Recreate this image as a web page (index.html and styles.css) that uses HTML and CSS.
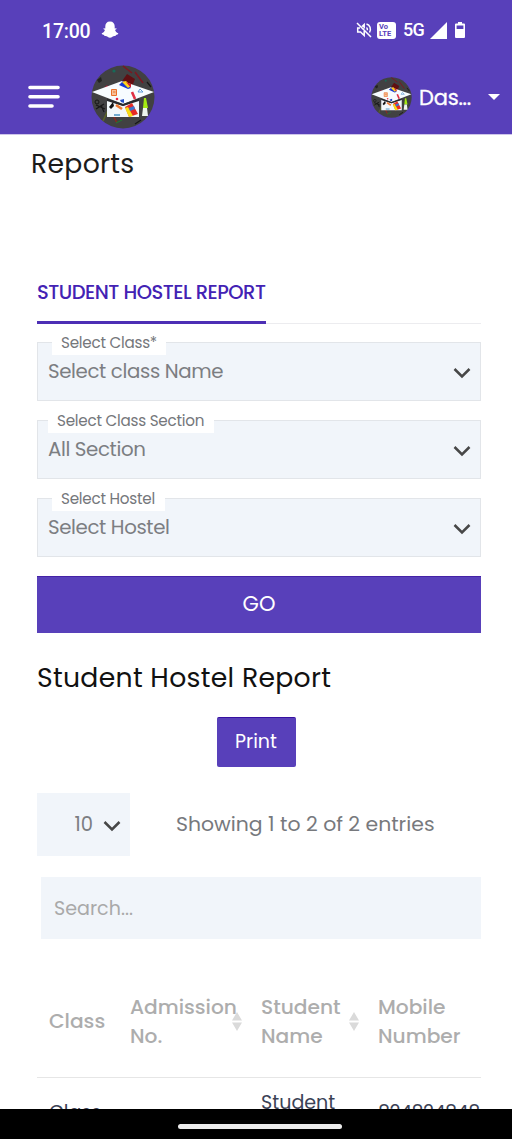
FILE: index.html
```html
<!DOCTYPE html>
<html lang="en">
<head>
<meta charset="utf-8">
<meta name="viewport" content="width=device-width">
<title>Reports</title>
<link rel="stylesheet" href="styles.css">
</head>
<body>
<svg class="defs" width="0" height="0" aria-hidden="true">
  <symbol id="crest" viewBox="0 0 64 64">
    <circle cx="32" cy="32" r="31.5" fill="#414142"/>
    <path d="M36 9l8 5-4 10-11-5z" fill="#5f0f12"/>
    <path d="M32 1l9 7M44 7l8 11" stroke="#7d1621" stroke-width="1.5"/>
    <circle cx="23" cy="6" r="1.6" fill="#176a58"/>
    <path d="M6 15l4-3 1 4-3 2z" fill="#222"/>
    <path d="M12 24l4-4 2 3-4 3z" fill="#a31731"/>
    <path d="M5 40l9 4M5 44l8-5M10 40l3 7M56 17l4 5M50 55l-6 4" stroke="#171717" stroke-width="1.3" fill="none"/>
    <circle cx="6" cy="37" r="2" fill="none" stroke="#171717"/>
    <path d="M18 43l-6 13" stroke="#5b6427" stroke-width="1.6"/>
    <path d="M22 50l4 8" stroke="#8b2a20" stroke-width="1.6"/>
    <path d="M25 58l6-3" stroke="#247431" stroke-width="1.2"/>
    <path d="M16 35l16 6 16-6v17H16z" fill="#f2f8fa"/>
    <path d="M1 27l30-11 32 11-31 12z" fill="#f7fcff"/>
    <path d="M16 33.500l16 5.500 16-5.500v2.500l-16 5-16-5z" fill="#28292d"/>
    <path d="M28 20l4-4 8 7-3 1z" fill="#1739d5"/>
    <path d="M31 17l4-1 5 5-3 2z" fill="#ffd51c"/>
    <path d="M35 17l5 2v4z" fill="#d4202b"/>
    <path d="M20.500 24.500h5v6h-5zM22 27h2.500" fill="#f7c19a" stroke="#ea712a"/>
    <path d="M41 27l3 7" stroke="#df3045" stroke-width="2.600"/>
    <path d="M47 27l2-3 3 3z" fill="none" stroke="#5c9ad6"/>
    <path d="M29 35l4-1v4l-3-1z" fill="#254fc4"/>
    <circle cx="26" cy="34" r="1.3" fill="#e92a42"/>
    <path d="M34 42l7-4 6 11-9 3z" fill="#e62c26"/>
    <path d="M34 43l3-1 5 9-4 1z" fill="#f7dd15"/>
    <path d="M38 43l5-2 1 3-5 2z" fill="#3c75cf"/>
    <path d="M25 40l6 4" stroke="#ee7931" stroke-width="2.6"/>
    <path d="M18 42l4-5 1 4-3 3z" fill="#121212"/>
    <path d="M23 50h6" stroke="#73acd0" stroke-width="2"/>
    <path d="M53 33h2l2 10h-5z" fill="#a4ea12"/>
    <path d="M52 43h4l1 8h-6z" fill="#eef5ed"/>
  </symbol>
  <symbol id="chevron" viewBox="0 0 18 12">
    <path d="M1.5 2L9 9.500L16.500 2" fill="none" stroke="#474747" stroke-width="2.500"/>
  </symbol>
  <symbol id="sort" viewBox="0 0 10 19">
    <path d="M5 0l5 8.500H0zM0 10.500h10L5 19z" fill="#dadada"/>
  </symbol>
</svg>

<div class="screen">
  <header class="top">
    <div class="status">
      <span class="clock">17:00</span>
      <svg class="ghost" viewBox="0 0 18 18"><path d="M9 .5c3.200 0 4.700 2.100 4.700 4.800v2.200l1.700-.3c.5.700-.4 1.300-1.300 1.700.3 1.600 1.500 2.800 3.200 3.400-.1 1.200-1.300 1.400-2.400 1.600l-.4 1.200c-1.300-.2-2.200-.1-3.100.7-1.500 1.200-3.300 1.200-4.800 0-.9-.8-1.800-.9-3.100-.7l-.4-1.200C2 13.700.8 13.500.7 12.300c1.700-.6 2.900-1.800 3.200-3.400-.9-.4-1.800-1-1.300-1.700l1.700.3V5.300C4.300 2.600 5.800.5 9 .5z" fill="#fff"/></svg>
      <div class="signals">
        <svg class="mute" viewBox="0 0 16 16" fill="none" stroke="#fff" stroke-width="1.500"><path d="M1 1l14 14M6 4.500L8.200 2.500v4M8.200 9v4.500L4.500 10H1.700V6H4M10.500 5.500c.8.700 1 1.500.9 2.700M10.500 2c3.500 1 5 5 3 8.500"/></svg>
        <span class="volte"><span>Vo</span><span>LTE</span></span>
        <span class="net">5G</span>
        <svg class="bars" viewBox="0 0 17 17"><path d="M17 0v17H0z" fill="#fff"/></svg>
        <svg class="battery" viewBox="0 0 10 16"><path d="M3 0h4v1.500h2q1 0 1 1V15q0 1-1 1H1q-1 0-1-1V2.500q0-1 1-1h2z" fill="#fff"/><path d="M1.600 3.500h6.800v3.500H1.600z" fill="#5840ba"/></svg>
      </div>
    </div>
    <nav class="bar">
      <svg class="menu" viewBox="0 0 32 24" stroke="#fff" stroke-width="3.600" stroke-linecap="round"><path d="M2 2.500h28M2 11.800h28M2 21h22"/></svg>
      <svg class="logo"><use href="#crest"/></svg>
      <div class="user">
        <svg class="avatar"><use href="#crest"/></svg>
        <span class="name">Das...</span>
        <svg class="caret" viewBox="0 0 12 6"><path d="M0 0h12L6 6z" fill="#fff"/></svg>
      </div>
    </nav>
  </header>

  <main class="page">
    <h1 class="title">Reports</h1>
    <div class="tabs"><span class="tab">STUDENT HOSTEL REPORT</span></div>
    <div class="form">
      <div class="field">
        <span class="label wide">Select Class*</span>
        <span class="value">Select class Name</span>
        <svg class="chev"><use href="#chevron"/></svg>
      </div>
      <div class="field">
        <span class="label section">Select Class Section</span>
        <span class="value">All Section</span>
        <svg class="chev"><use href="#chevron"/></svg>
      </div>
      <div class="field">
        <span class="label hostel">Select Hostel</span>
        <span class="value">Select Hostel</span>
        <svg class="chev"><use href="#chevron"/></svg>
      </div>
    </div>
    <button class="go">GO</button>
    <h2 class="subtitle">Student Hostel Report</h2>
    <button class="print">Print</button>
    <div class="paging">
      <div class="count"><span>10</span><svg class="chev"><use href="#chevron"/></svg></div>
      <span class="info">Showing 1 to 2 of 2 entries</span>
    </div>
    <div class="search">Search...</div>
    <div class="grid head">
      <div class="cell">Class</div>
      <div class="cell">Admission<br>No.<svg class="sort s-adm"><use href="#sort"/></svg></div>
      <div class="cell">Student<br>Name<svg class="sort s-name"><use href="#sort"/></svg></div>
      <div class="cell">Mobile<br>Number</div>
    </div>
    <div class="grid row">
      <div class="cell low">Class</div>
      <div class="cell"></div>
      <div class="cell">Student</div>
      <div class="cell low phone">824824848</div>
    </div>
  </main>
  <footer class="gesture"><span class="pill"></span></footer>
</div>
</body>
</html>
```
FILE: styles.css
```css
* { box-sizing: border-box; }
body { margin: 0; background: #fff; font-family: Poppins, Inter, "Open Sans", sans-serif; }
.defs { position: absolute; }
.screen { width: 512px; height: 1139px; overflow: hidden; display: flex; flex-direction: column; }

.top { flex: none; height: 135px; background: #5840ba; border-bottom: 1px solid #cdc5ea; color: #fff; }
.status { height: 60px; padding: 0 46px 0 42px; display: flex; align-items: center; font-family: Roboto, sans-serif; }
.clock { font-size: 19.5px; font-weight: 500; line-height: 20px; letter-spacing: -0.2px; width: 59px; padding-top: 3px; }
.ghost { width: 18px; height: 18px; }
.signals { margin-left: auto; display: flex; align-items: center; }
.mute { width: 16px; height: 16px; margin-right: 5px; }
.volte { width: 19px; height: 17px; border-radius: 3px; background: #fff; color: #5840ba; font-size: 7.5px; line-height: 7px; font-weight: 700; padding: 1px 0 0 2px; display: flex; flex-direction: column; margin-right: 7px; }
.net { font-size: 18px; font-weight: 500; line-height: 20px; letter-spacing: -0.8px; margin-right: 6px; }
.bars { width: 17px; height: 17px; margin-right: 8px; }
.battery { width: 10px; height: 16px; margin-right: 1px; }
.bar { height: 74px; padding: 0 12px 0 28px; display: flex; align-items: center; }
.menu { width: 32px; height: 24px; margin-right: 31px; }
.logo { width: 64px; height: 64px; }
.user { margin-left: auto; display: flex; align-items: center; }
.avatar { width: 41px; height: 41px; margin-right: 7px; }
.name { font-size: 21px; font-weight: 400; width: 69px; line-height: 28px; padding-top: 1px; letter-spacing: -0.2px; -webkit-text-stroke: 0.3px #fff; }
.caret { width: 12px; height: 6px; }

.page { flex: 1; min-height: 0; overflow: hidden; padding: 0 31px 0 37px; display: flex; flex-direction: column; }
.title { margin: 11px 0 0 -6px; font-size: 26.7px; font-weight: 400; line-height: 36px; letter-spacing: 0.3px; color: #1c1c1c; }
.tabs { flex: none; margin-top: 93px; height: 49px; border-bottom: 1px solid #ececef; display: flex; }
.tab { height: 49px; padding-top: 3px; width: 229px; border-bottom: 3px solid #4d2fb5; font-size: 19.5px; font-weight: 500; line-height: 30px; letter-spacing: -0.5px; color: #4322b4; white-space: nowrap; }
.form { flex: none; margin-top: 18px; display: flex; flex-direction: column; gap: 19px; }
.field { position: relative; height: 59px; border: 1px solid #e2e5e9; background: #f1f5fa; display: flex; align-items: center; justify-content: space-between; padding: 0 9px 0 10px; }
.label { position: absolute; top: -10px; left: 14px; height: 22px; padding: 0 9px; background: #fff; color: #75777b; font-size: 15.2px; letter-spacing: -0.25px; line-height: 20px; white-space: nowrap; }
.label.wide { width: 114px; }
.label.section { left: 10px; width: 166px; }
.label.hostel { width: 113px; }
.value { font-size: 19.8px; letter-spacing: -0.38px; font-weight: 400; line-height: 28px; padding-bottom: 2px; color: #7c7e82; }
.chev { width: 18px; height: 12px; margin-top: 3px; }
.go { flex: none; margin-top: 19px; height: 57px; border: 0; background: #5840ba; border-top: 1px solid #4422a6; color: #fff; font: 400 21px Poppins, Inter, sans-serif; padding: 0 0 3px; }
.subtitle { margin: 26px 0 0; font-size: 26.7px; font-weight: 400; line-height: 38px; letter-spacing: 0.3px; color: #111; white-space: nowrap; }
.print { flex: none; align-self: center; margin: 20px 0 0 -6px; width: 79px; height: 50px; border: 0; border-top: 1px solid #3610a0; border-radius: 2px; background: #5840ba; color: #fff; font: 400 19px Poppins, Inter, sans-serif; padding: 0 0 3px; }
.paging { flex: none; margin-top: 26px; display: flex; align-items: center; }
.count { width: 93px; height: 63px; background: #f1f5fa; display: flex; align-items: center; justify-content: flex-end; gap: 10px; padding-right: 9px; font-size: 19.5px; color: #7c7e82; }
.info { margin-left: 46px; font-size: 20.4px; line-height: 30px; padding-bottom: 2px; color: #77797d; white-space: nowrap; }
.search { flex: none; margin: 21px 0 0 4px; height: 62px; background: #f1f5fa; padding-left: 13px; line-height: 63px; font-size: 19.1px; color: #a9a9a9; }
.grid { flex: none; display: grid; grid-template-columns: 93px 131px 117px 103px; }
.head { margin-top: 38px; height: 101px; border-bottom: 1px solid #e6e6e6; align-items: center; padding: 0 0 11px 0; font-size: 20.2px; font-weight: 500; line-height: 28.5px; color: #adadad; }
.cell { position: relative; white-space: nowrap; }
.head .cell:first-child, .row .cell:first-child { padding-left: 12px; }
.sort { position: absolute; width: 10px; height: 19px; top: 19px; }
.s-adm { left: 102px; }
.s-name { left: 88px; }
.row { padding-top: 11px; font-size: 19.1px; line-height: 28px; color: #3b4256; }
.low { padding-top: 10px; }
.phone { letter-spacing: -0.5px; }

.gesture { flex: none; height: 30px; background: #000; display: flex; align-items: center; justify-content: center; padding: 5px 0 0 8px; }
.pill { width: 164px; height: 5px; border-radius: 3px; background: #ececec; }
```
